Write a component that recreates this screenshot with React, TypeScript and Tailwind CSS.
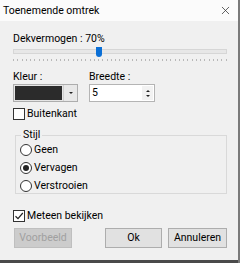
import { X } from 'lucide-react';

const ticks = Array.from({ length: 51 }, (_, i) => i);

function Radio({ label, checked }: { label: string; checked?: boolean }) {
  return (
    <div className="flex items-center h-[18px]">
      <span className="w-[12px] h-[12px] rounded-full border border-[#333] bg-white flex items-center justify-center">
        {checked && <span className="w-[6px] h-[6px] rounded-full bg-[#222]" />}
      </span>
      <span className="ml-[2px]">{label}</span>
    </div>
  );
}

export default function App() {
  return (
    <div
      className="w-[240px] h-[263px] bg-[#f0f0f0] text-[10.5px] text-black flex flex-col border-r-[2px] border-[#7a7a7a] overflow-hidden"
      style={{ fontFamily: 'Roboto, "Liberation Sans", sans-serif' }}
    >
      {/* title bar */}
      <div className="h-[21px] bg-[#fbfbfb] flex items-center justify-between pl-[3px] pr-[6px] shrink-0">
        <span>Toenemende omtrek</span>
        <X className="w-[13px] h-[13px] text-[#333]" strokeWidth={1.4} />
      </div>

      <div className="flex flex-col pl-[13px] pr-[11px] pt-[10px]">
        <div className="leading-[15px]">Dekvermogen : 70%</div>

        {/* slider */}
        <div className="relative h-[12px]">
          <div className="absolute left-0 right-0 top-[3px] h-[5px] bg-[#e7e7e7] border border-[#d6d6d6]" />
          <div className="absolute left-[83px] top-[1px] w-[6px] h-[10px] bg-[#0a6fd6] rounded-b-[3px]" />
        </div>
        <div className="flex justify-between h-[3px] mt-[1px]">
          {ticks.map((t) => (
            <span key={t} className="w-[1px] h-[2px] bg-[#b8b8b8]" />
          ))}
        </div>

        {/* kleur / breedte */}
        <div className="flex gap-[11px] mt-[7px]">
          <div className="flex flex-col">
            <span className="leading-[15px]">Kleur :</span>
            <div className="flex w-[65px] h-[18px] border border-[#adadad] bg-[#e5e5e5]">
              <div className="m-[1px] w-[47px] bg-[#2b2b2b]" />
              <div className="flex-1 flex items-center justify-center bg-[#e8e8e8] border-l border-[#cfcfcf]">
                <span className="w-0 h-0 border-l-[2px] border-r-[2px] border-t-[2px] border-l-transparent border-r-transparent border-t-[#222]" />
              </div>
            </div>
          </div>
          <div className="flex flex-col">
            <span className="leading-[15px]">Breedte :</span>
            <div className="flex w-[66px] h-[18px] border border-[#b4b4b4] bg-white">
              <span className="flex-1 pl-[2px] leading-[16px]">5</span>
              <div className="w-[11px] flex flex-col items-center justify-center gap-[3px] bg-[#f2f2f2] my-[1px] mr-[1px]">
                <span className="w-0 h-0 border-l-[2px] border-r-[2px] border-b-[2px] border-l-transparent border-r-transparent border-b-[#222]" />
                <span className="w-0 h-0 border-l-[2px] border-r-[2px] border-t-[2px] border-l-transparent border-r-transparent border-t-[#222]" />
              </div>
            </div>
          </div>
        </div>

        {/* buitenkant */}
        <div className="flex items-center mt-[5px] h-[14px]">
          <span className="w-[12px] h-[12px] border border-[#333] bg-white" />
          <span className="ml-[2px]">Buitenkant</span>
        </div>

        {/* stijl group */}
        <div className="relative mt-[14px] ml-[2px] border border-[#d9d9d9] h-[59px] pl-[4px] pt-[5px]">
          <span className="absolute left-[5px] top-[-9px] px-[2px] bg-[#f0f0f0] leading-[15px]">Stijl</span>
          <Radio label="Geen" />
          <Radio label="Vervagen" checked />
          <Radio label="Verstrooien" />
        </div>

        {/* meteen bekijken */}
        <div className="flex items-center mt-[15px] h-[14px]">
          <span className="w-[12px] h-[12px] border border-[#333] bg-white flex items-center justify-center">
            <svg width="10" height="10" viewBox="0 0 10 10">
              <path d="M1.5 5.2 L4 7.6 L8.8 2" fill="none" stroke="#222" strokeWidth="1.2" />
            </svg>
          </span>
          <span className="ml-[2px]">Meteen bekijken</span>
        </div>

        {/* buttons */}
        <div className="flex mt-[5px] h-[20px]">
          <div className="w-[58px] ml-[1px] bg-[#cccccc] border border-[#bfbfbf] text-[#a0a0a0] flex items-center justify-center">
            Voorbeeld
          </div>
          <div className="flex-1" />
          <div className="w-[57px] bg-[#e1e1e1] border border-[#adadad] flex items-center justify-center">Ok</div>
          <div className="w-[59px] ml-[6px] bg-[#e1e1e1] border border-[#adadad] flex items-center justify-center">
            Annuleren
          </div>
        </div>
      </div>

      <div className="flex-1" />
      <div className="h-[3px] bg-[#4a4a4a] shrink-0" />
    </div>
  );
}
